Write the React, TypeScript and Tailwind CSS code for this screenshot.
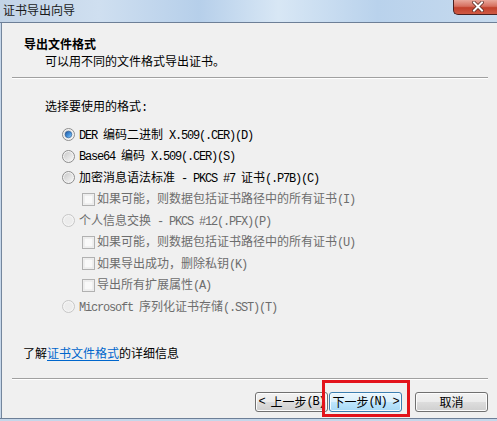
import React from "react";

function mix(text: string) {
  const parts = text.split(/([\x00-\x7f]+)/).filter((p) => p.length > 0);
  return parts.map((p, i) =>
    /^[\x00-\x7f]+$/.test(p) ? (
      <span key={i} className="[font-family:'Liberation_Mono',monospace] text-[12px] tracking-[-1.2px] whitespace-pre">
        {p}
      </span>
    ) : (
      <span key={i}>{p}</span>
    )
  );
}

function Radio({ checked, disabled }: { checked?: boolean; disabled?: boolean }) {
  return (
    <svg width="13" height="13" viewBox="0 0 13 13" className="shrink-0">
      <defs>
        <linearGradient id="rbg" x1="0" y1="0" x2="1" y2="1">
          <stop offset="0" stopColor="#cbcbcb" />
          <stop offset="1" stopColor="#f6f6f6" />
        </linearGradient>
        <linearGradient id="rdot" x1="0" y1="0" x2="1" y2="1">
          <stop offset="0" stopColor="#1a4f9a" />
          <stop offset="0.6" stopColor="#4d9ae0" />
          <stop offset="1" stopColor="#a8d8f8" />
        </linearGradient>
      </defs>
      {disabled ? (
        <>
          <circle cx="6.5" cy="6.5" r="6" fill="#f4f4f4" stroke="#c5c5c5" />
          <circle cx="6.5" cy="6.5" r="4.3" fill="#ececec" />
        </>
      ) : (
        <>
          <circle cx="6.5" cy="6.5" r="6" fill="#f4f4f4" stroke="#8c8c8c" />
          <circle cx="6.5" cy="6.5" r="4.5" fill="url(#rbg)" />
          {checked && <circle cx="6.5" cy="6.5" r="3.3" fill="url(#rdot)" stroke="#26558f" strokeWidth="0.6" />}
        </>
      )}
    </svg>
  );
}

function Check() {
  return (
    <svg width="13" height="13" viewBox="0 0 13 13" className="shrink-0">
      <rect x="0.5" y="0.5" width="12" height="12" fill="#f4f4f4" stroke="#b1b1b1" />
      <rect x="2" y="2" width="9" height="9" fill="#f9f9f9" stroke="#e6e6e6" strokeWidth="1" />
    </svg>
  );
}

function RadioRow({ label, checked, disabled }: { label: string; checked?: boolean; disabled?: boolean }) {
  return (
    <div className="h-[21.5px] flex items-center pl-[60px] gap-[4px]">
      <Radio checked={checked} disabled={disabled} />
      <span className={disabled ? "leading-[17px] text-[#6d6d6d] whitespace-nowrap" : "leading-[17px] text-black whitespace-nowrap"}>
        {mix(label)}
      </span>
    </div>
  );
}

function CheckRow({ label }: { label: string }) {
  return (
    <div className="h-[21.5px] flex items-center pl-[80px] gap-[2px]">
      <Check />
      <span className="leading-[17px] text-[#6d6d6d] whitespace-nowrap">{mix(label)}</span>
    </div>
  );
}

function CloseBtn() {
  return (
    <div className="w-[44px] h-[15px] rounded-bl-[5px] border-l border-b border-[#4a2020] bg-[linear-gradient(180deg,#e9a89c_0%,#d66f5f_45%,#c2402c_55%,#cf5a44_100%)] flex items-start pl-[18px] pt-[1px]">
      <svg width="12" height="11" viewBox="0 0 12 11">
        <path d="M2 1.5 L10 9.5 M10 1.5 L2 9.5" stroke="#5a2a22" strokeWidth="3.6" strokeLinecap="square" />
        <path d="M2 1.5 L10 9.5 M10 1.5 L2 9.5" stroke="#ffffff" strokeWidth="2" strokeLinecap="square" />
      </svg>
    </div>
  );
}

export default function App() {
  return (
    <div className="w-[497px] h-[421px] overflow-hidden flex flex-col bg-[#c6d7ea] [font-family:'Noto_Sans_CJK_SC','Noto_Sans',sans-serif] text-[12px] text-black">
      {/* title bar */}
      <div className="h-[22px] flex items-start bg-[linear-gradient(90deg,#c2d3e6_0%,#cfdff0_20%,#b6cfea_40%,#d8e7f5_56%,#b9d2ec_76%,#c6daee_100%)]">
        <div className="pl-[3px] pt-[1px] leading-[17px] text-[12px] text-[#1a1a1a]">证书导出向导</div>
        <div className="flex-1" />
        <CloseBtn />
      </div>
      <div className="h-px bg-[#6d7f97]" />
      <div className="flex-1 flex">
        <div className="w-px bg-[#c6d7ea]" />
        <div className="w-px bg-[#74869d]" />
        <div className="flex-1 bg-[#f0f0f0] flex flex-col">
          {/* header */}
          <div className="h-[54px] pt-[11.5px] pl-[22px]">
            <div className="leading-[17px] font-bold">导出文件格式</div>
            <div className="leading-[17px] pl-[21px]">可以用不同的文件格式导出证书。</div>
          </div>
          <div className="ml-[10px] w-[476px] h-[2px] border-t border-t-[#a0a0a0] border-b border-b-white" />

          {/* body */}
          <div className="mt-[18px] pl-[43px] leading-[17px]">{mix("选择要使用的格式:")}</div>
          <div className="mt-[7px] flex flex-col">
            <RadioRow label="DER 编码二进制 X.509(.CER)(D)" checked />
            <RadioRow label="Base64 编码 X.509(.CER)(S)" />
            <RadioRow label="加密消息语法标准 - PKCS #7 证书(.P7B)(C)" />
            <CheckRow label="如果可能，则数据包括证书路径中的所有证书(I)" />
            <RadioRow label="个人信息交换 - PKCS #12(.PFX)(P)" disabled />
            <CheckRow label="如果可能，则数据包括证书路径中的所有证书(U)" />
            <CheckRow label="如果导出成功，删除私钥(K)" />
            <CheckRow label="导出所有扩展属性(A)" />
            <RadioRow label="Microsoft 序列化证书存储(.SST)(T)" disabled />
          </div>

          <div className="mt-[26px] pl-[21px] leading-[17px]">
            了解<span className="text-[#0066cc] underline underline-offset-2">证书文件格式</span>的详细信息
          </div>

          <div className="mt-[17.5px] ml-[10px] w-[476px] h-[2px] border-t border-t-[#a0a0a0] border-b border-b-white" />

          {/* buttons */}
          <div className="mt-[12px] flex justify-end pr-[9px]">
            <div className="w-[73px] h-[20px] rounded-[3px] border border-[#707070] bg-[linear-gradient(180deg,#f2f2f2_0%,#ebebeb_49%,#dddddd_50%,#cfcfcf_100%)] shadow-[inset_0_0_0_1px_#fcfcfc] flex items-center justify-center leading-none whitespace-nowrap">
              {mix("< 上一步(B)")}
            </div>
            <div className="relative ml-px">
              <div className="w-[73px] h-[20px] rounded-[3px] border border-[#3c7fb1] bg-[linear-gradient(180deg,#eaf6fd_0%,#d9f0fc_49%,#bee6fd_50%,#a7d9f5_100%)] shadow-[inset_0_0_0_1px_#f4fbff] flex items-center justify-center leading-none whitespace-nowrap">
                {mix("下一步(N) >")}
              </div>
              <div className="absolute left-[-7px] top-[-12px] w-[88px] h-[37px] border-[3px] border-[#e3131b]" />
            </div>
            <div className="ml-[13px] w-[73px] h-[20px] rounded-[3px] border border-[#707070] bg-[linear-gradient(180deg,#f2f2f2_0%,#ebebeb_49%,#dddddd_50%,#cfcfcf_100%)] shadow-[inset_0_0_0_1px_#fcfcfc] flex items-center justify-center leading-none">
              取消
            </div>
          </div>
          <div className="flex-1" />
        </div>
      </div>
      <div className="h-px bg-[#6d7f97]" />
      <div className="h-[2px] bg-[#c6d7ea]" />
    </div>
  );
}
